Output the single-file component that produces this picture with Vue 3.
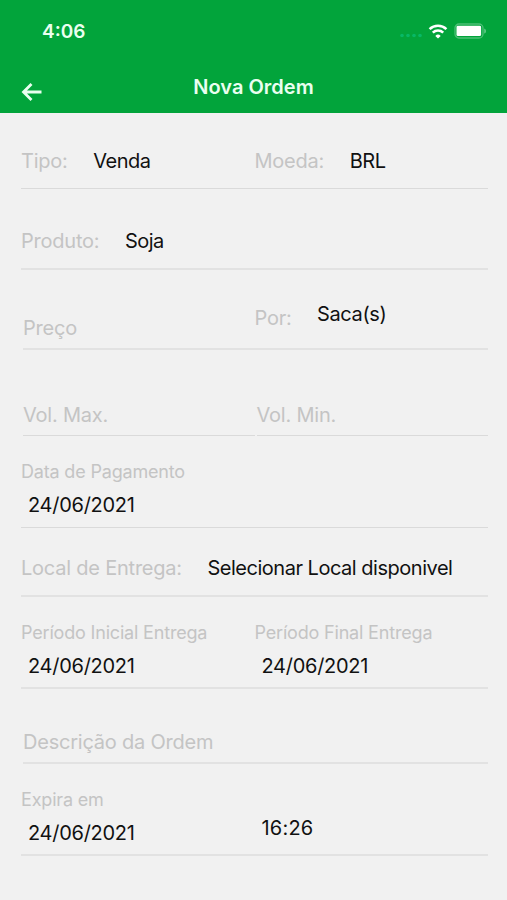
<template>
  <div class="screen">
    <header class="header">
      <div class="status-bar">
        <span class="clock">4:06</span>
        <div class="status-icons">
          <svg class="signal" viewBox="0 0 24 5" aria-hidden="true">
            <circle v-for="x in [3, 9, 15, 21]" :key="x" :cx="x" cy="2.5" r="1.8" />
          </svg>
          <svg class="wifi" viewBox="0 0 20 15" aria-hidden="true">
            <path d="M1.6 5.1a12.2 12.2 0 0 1 16.8 0" />
            <path d="M4.8 8.6a7.6 7.6 0 0 1 10.4 0" />
            <path class="wifi-dot" d="M10 14.6 7.3 11.9a3.8 3.8 0 0 1 5.4 0Z" />
          </svg>
          <svg class="battery" viewBox="0 0 33 16" aria-hidden="true">
            <rect class="battery-case" x="1" y="1" width="28" height="14" rx="4" />
            <rect class="battery-level" x="2.5" y="2.7" width="24.6" height="10.4" rx="1.4" />
            <path class="battery-tip" d="M30.2 5.4c2.4.8 2.4 4.4 0 5.2Z" />
          </svg>
        </div>
      </div>
      <nav class="nav">
        <svg class="back" viewBox="0 0 22 20" aria-hidden="true">
          <path d="M20.5 10H2.5M10.5 2 2.5 10l8 8" />
        </svg>
        <h1 class="title">Nova Ordem</h1>
      </nav>
    </header>

    <main class="form">
      <div v-for="row in rows" :key="row.name" class="row" :class="row.name">
        <div v-for="(field, i) in row.fields" :key="i" class="field" :class="field.type">
          <span v-if="field.label" class="label">{{ field.label }}</span>
          <span v-if="field.value" class="value" :class="field.kind">{{ field.value }}</span>
        </div>
      </div>
    </main>
  </div>
</template>

<script setup>
const rows = [
  {
    name: 'tipo',
    fields: [
      { type: 'select', label: 'Tipo:', value: 'Venda' },
      { type: 'select', label: 'Moeda:', value: 'BRL' },
    ],
  },
  { name: 'produto', fields: [{ type: 'select', label: 'Produto:', value: 'Soja' }] },
  {
    name: 'preco',
    fields: [
      { type: 'input', label: 'Preço' },
      { type: 'select', label: 'Por:', value: 'Saca(s)' },
    ],
  },
  {
    name: 'volume',
    fields: [
      { type: 'input', label: 'Vol. Max.' },
      { type: 'input', label: 'Vol. Min.' },
    ],
  },
  {
    name: 'pagamento',
    fields: [{ type: 'date', label: 'Data de Pagamento', value: '24/06/2021' }],
  },
  {
    name: 'local',
    fields: [{ type: 'select', label: 'Local de Entrega:', value: 'Selecionar Local disponivel' }],
  },
  {
    name: 'periodo',
    fields: [
      { type: 'date', label: 'Período Inicial Entrega', value: '24/06/2021' },
      { type: 'date', label: 'Período Final Entrega', value: '24/06/2021' },
    ],
  },
  { name: 'descricao', fields: [{ type: 'input', label: 'Descrição da Ordem' }] },
  {
    name: 'expira',
    fields: [
      { type: 'date', label: 'Expira em', value: '24/06/2021' },
      { type: 'date', value: '16:26', kind: 'time' },
    ],
  },
]
</script>

<style>
body {
  margin: 0;
  background: #f1f1f1;
}
</style>

<style scoped>
.screen {
  width: 507px;
  height: 900px;
  overflow: hidden;
  background: #f1f1f1;
  font-family: Inter, 'Liberation Sans', sans-serif;
  color: #111;
}

.header {
  height: 113px;
  background: #02a43b;
  color: #eafff0;
}

.status-bar {
  display: flex;
  justify-content: space-between;
  align-items: center;
  height: 62px;
  padding: 0 20px 0 42px;
}
.clock {
  font-size: 19px;
  font-weight: 600;
}
.status-icons {
  display: flex;
  align-items: center;
}
.signal {
  width: 24px;
  height: 5px;
  margin: 9px 5px 0 0;
  fill: #08b866;
}
.wifi {
  width: 20px;
  height: 15px;
  margin-right: 6px;
  fill: none;
  stroke: #fff;
  stroke-width: 2.6;
}
.wifi-dot {
  fill: #fff;
  stroke: none;
}
.battery {
  width: 33px;
  height: 16px;
}
.battery-case {
  fill: none;
  stroke: #4cbf76;
  stroke-width: 1.3;
}
.battery-level {
  fill: #fff;
}
.battery-tip {
  fill: #5fc785;
}

.nav {
  display: grid;
  grid-template-columns: 60px 1fr 60px;
  height: 51px;
}
.back {
  width: 22px;
  height: 20px;
  margin: 20px 0 0 21px;
  fill: none;
  stroke: #eafff0;
  stroke-width: 2.8;
}
.title {
  margin: 13px 0 0;
  font-size: 20px;
  line-height: 24px;
  font-weight: 600;
  text-align: center;
}

.form {
  padding: 0 19px 0 21px;
}

.row {
  display: flex;
  box-sizing: border-box;
  border-bottom: 2px solid #e2e2e2;
}
.field {
  display: flex;
  align-items: flex-end;
  flex: 1;
  font-size: 20px;
  line-height: 24px;
  white-space: nowrap;
}
.label {
  color: #c4c4c4;
  letter-spacing: -0.22px;
}

.select {
  padding-bottom: 15px;
}
.select .value {
  margin-left: 25.5px;
  letter-spacing: -0.48px;
}
.input {
  padding-bottom: 8px;
}

.date {
  flex-direction: column;
  align-items: flex-start;
  justify-content: flex-end;
  padding-bottom: 9px;
}
.date .label {
  margin-bottom: 9px;
  font-size: 18px;
  letter-spacing: -0.18px;
}
.date .value {
  margin-left: 7px;
  letter-spacing: -0.28px;
}
.date .time {
  margin-bottom: 5px;
  letter-spacing: 0.2px;
}

.tipo {
  height: 76px;
  border-bottom: 1px solid #dadada;
}
.produto { height: 81px; }
.preco { height: 80px; }
.volume { height: 86px; }
.pagamento {
  height: 92px;
  border-bottom: 1px solid #dadada;
}
.pagamento .date {
  padding-bottom: 10px;
}
.local { height: 69px; }
.periodo { height: 92px; }
.descricao { height: 75px; }
.expira { height: 92px; }

/* text inputs sit slightly inside the pickers */
.preco,
.descricao {
  margin-left: 2px;
}

/* each volume input carries its own underline */
.volume {
  border-bottom: none;
}
.volume .input {
  margin-left: 2px;
  border-bottom: 1px solid #dadada;
}

/* the unit picker floats above the input baseline */
.preco .select {
  flex: 0 0 233.5px;
  padding-bottom: 18px;
}
.preco .select .value {
  margin-bottom: 4px;
  letter-spacing: -0.4px;
}
</style>
